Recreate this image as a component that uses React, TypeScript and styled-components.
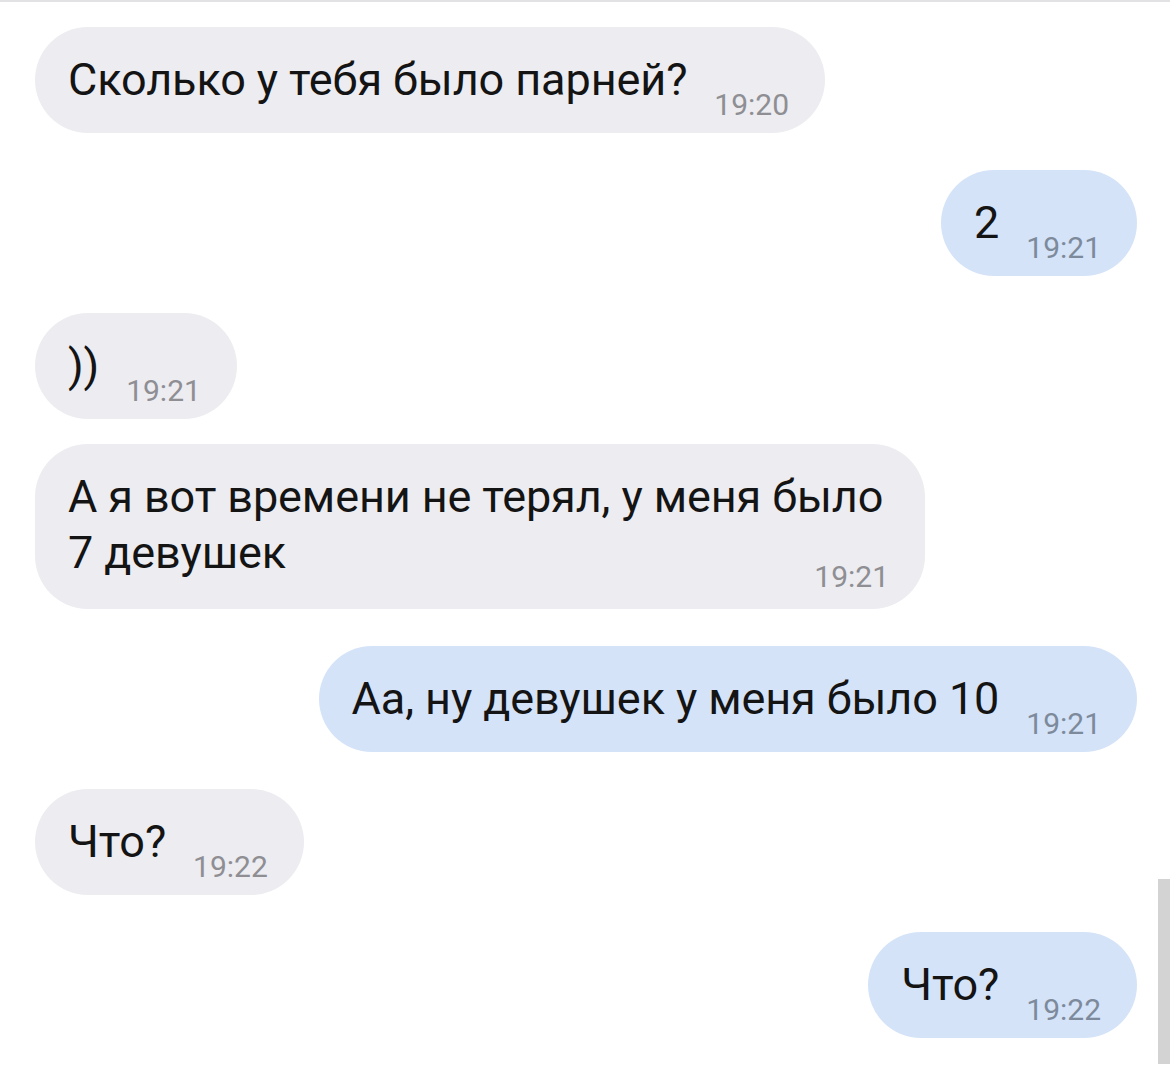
import styled, { createGlobalStyle } from "styled-components";

const GlobalStyle = createGlobalStyle`
  html, body {
    margin: 0;
    padding: 0;
    background: #ffffff;
  }
  * {
    box-sizing: border-box;
  }
`;

const Screen = styled.div`
  position: relative;
  width: 1170px;
  height: 1078px;
  overflow: hidden;
  background: #ffffff;
  border-top: 2px solid #e2e2e4;
  font-family: Roboto, "Noto Sans", "Liberation Sans", sans-serif;
`;

const Thread = styled.div`
  display: flex;
  flex-direction: column;
  padding: 25px 33px 0 35px;
`;

interface BubbleProps {
  $out?: boolean;
  $tight?: boolean;
  $multiline?: boolean;
}

const Bubble = styled.div<BubbleProps>`
  display: flex;
  flex-wrap: wrap;
  align-items: flex-end;
  justify-content: flex-end;
  column-gap: 27px;
  align-self: ${(p) => (p.$out ? "flex-end" : "flex-start")};
  max-width: 890px;
  margin-top: ${(p) => (p.$tight ? "25px" : "37px")};
  padding: 25px 36px 25px 33px;
  border-radius: 53px;
  background: ${(p) => (p.$out ? "#d4e3f8" : "#ececf1")};

  &:first-child {
    margin-top: 0;
  }
`;

const Text = styled.span`
  font-size: 45px;
  line-height: 56px;
  color: #141414;
  letter-spacing: -0.1px;
`;

const Time = styled.span<BubbleProps>`
  font-size: 30px;
  line-height: 26px;
  color: ${(p) => (p.$out ? "#7d8a9b" : "#8e8e93")};
  margin-bottom: ${(p) => (p.$multiline ? "-6px" : "-10px")};
  margin-top: ${(p) => (p.$multiline ? "-17px" : "0")};
`;

const ScrollThumb = styled.div`
  position: absolute;
  right: 0;
  top: 877px;
  width: 12px;
  height: 185px;
  background: #d3d3d3;
`;

interface Message {
  text: string;
  time: string;
  out?: boolean;
  tight?: boolean;
  multiline?: boolean;
}

const messages: Message[] = [
  { text: "Сколько у тебя было парней?", time: "19:20" },
  { text: "2", time: "19:21", out: true },
  { text: "))", time: "19:21" },
  {
    text: "А я вот времени не терял, у меня было 7 девушек",
    time: "19:21",
    tight: true,
    multiline: true,
  },
  { text: "Аа, ну девушек у меня было 10", time: "19:21", out: true },
  { text: "Что?", time: "19:22" },
  { text: "Что?", time: "19:22", out: true },
];

const App = () => {
  return (
    <>
      <GlobalStyle />
      <Screen>
        <Thread>
          {messages.map((m, i) => (
            <Bubble key={i} $out={m.out} $tight={m.tight} $multiline={m.multiline}>
              <Text>{m.text}</Text>
              <Time $out={m.out} $multiline={m.multiline}>
                {m.time}
              </Time>
            </Bubble>
          ))}
        </Thread>
        <ScrollThumb />
      </Screen>
    </>
  );
};

export default App;
